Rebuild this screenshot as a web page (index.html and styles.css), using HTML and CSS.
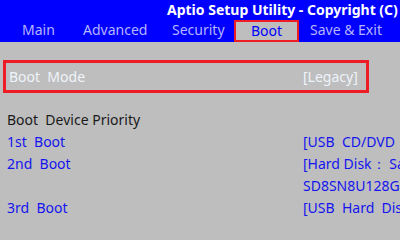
FILE: index.html
```html
<!DOCTYPE html>
<html lang="en">

<head>
  <meta charset="UTF-8">
  <title>Aptio Setup Utility</title>
  <link rel="stylesheet" href="styles.css">
</head>

<body>
  <div class="header">
    <div class="title">Aptio Setup Utility - Copyright (C) 2015 American Megatrends, Inc.</div>
    <div class="tabs">
      <span class="tab tab-main">Main</span>
      <span class="tab tab-adv">Advanced</span>
      <span class="tab tab-sec">Security</span>
      <span class="tab tab-boot active">Boot</span>
      <span class="tab">Save &amp; Exit</span>
    </div>
  </div>

  <div class="content">
    <div class="row selected">
      <span class="label">Boot&nbsp; Mode</span>
      <span class="value">[Legacy]</span>
    </div>

    <div class="section">Boot&nbsp; Device Priority</div>
    <div class="row item">
      <span class="label">1st&nbsp; Boot</span>
      <span class="value">[USB&nbsp; CD/DVD&nbsp; Drive]</span>
    </div>
    <div class="row item">
      <span class="label">2nd&nbsp; Boot</span>
      <span class="value">[Hard Disk：&nbsp;SanDisk<br>SD8SN8U128G1002]</span>
    </div>
    <div class="row item">
      <span class="label">3rd&nbsp; Boot</span>
      <span class="value">[USB&nbsp; Hard&nbsp; Disk]</span>
    </div>
  </div>
</body>

</html>
```

FILE: styles.css
```css
body {
  margin: 0;
  width: 400px;
  height: 240px;
  overflow: hidden;
  background-color: #bebebe;
  font-family: 'Noto Sans', sans-serif;
  font-size: 14px;
  white-space: nowrap;
}

.header {
  background-color: #0000ff;
  height: 42px;
  overflow: hidden;
}

.title {
  padding-left: 167px;
  color: #ffffff;
  font-weight: bold;
  font-size: 14px;
  line-height: 20px;
}

.tabs {
  display: flex;
  padding-left: 22px;
  height: 22px;
}

.tab {
  flex: none;
  color: #b4b4ff;
  line-height: 20px;
}

.tab-main { width: 61px; }
.tab-adv { width: 89px; }
.tab-sec { width: 62px; }

.tab.active {
  width: 61px;
  background-color: #bebebe;
  color: #0000ff;
  border: 2px solid #ee1c24;
  line-height: 17px;
  text-align: center;
  margin-right: 11px;
}

.content {
  padding: 18px 0 0 4px;
}

.row {
  display: flex;
  line-height: 22px;
}

.row .label {
  flex: none;
  width: 296px;
  padding-left: 3px;
}

.row .value {
  flex: none;
}

.selected {
  color: #eef4fb;
  border: 3px solid #ee1c24;
  margin-left: -1px;
  width: 360px;
  height: 27px;
  line-height: 27px;
}

.selected .label {
  width: 294px;
}

.section {
  margin-top: 16px;
  padding-left: 3px;
  color: #1a1a1a;
  line-height: 22px;
}

.item {
  color: #1414ee;
}
```
